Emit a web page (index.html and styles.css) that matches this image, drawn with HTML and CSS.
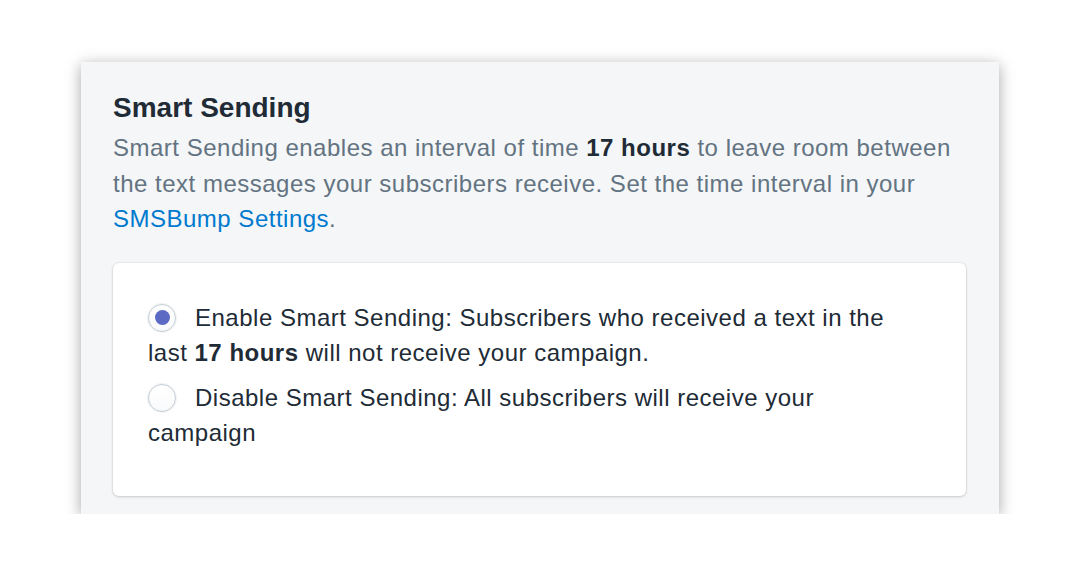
FILE: index.html
```html
<!DOCTYPE html>
<html>
<head>
<meta charset="utf-8">
<link rel="stylesheet" href="styles.css">
</head>
<body>
<div class="panel">
  <h2 class="title">Smart Sending</h2>
  <p class="desc">Smart Sending enables an interval of time <strong>17 hours</strong> to leave room between the text messages your subscribers receive. Set the time interval in your <a class="link" href="#">SMSBump Settings</a>.</p>
  <div class="card">
    <label class="option"><span class="radio"><span class="dot"></span></span>Enable Smart Sending: Subscribers who received a text in the last <strong>17 hours</strong> will not receive your campaign.</label>
    <label class="option"><span class="radio"></span>Disable Smart Sending: All subscribers will receive your campaign</label>
  </div>
</div>
</body>
</html>
```
FILE: styles.css
```css
html, body {
  margin: 0;
  padding: 0;
  background: #ffffff;
  font-family: "Liberation Sans", Arial, sans-serif;
}
.panel {
  margin: 62px 0 0 81px;
  width: 918px;
  box-sizing: border-box;
  background: #f4f6f8;
  padding: 28px 33px 18px 32px;
  box-shadow: 0 3px 14px rgba(0, 0, 0, 0.35);
}
.title {
  margin: 0;
  font-size: 28px;
  line-height: 36px;
  font-weight: 700;
  color: #212b36;
}
.desc {
  margin: 4px 0 0;
  font-size: 24px;
  line-height: 35.5px;
  letter-spacing: 0.5px;
  color: #637381;
}
.desc strong {
  color: #212b36;
  font-weight: 700;
}
.link {
  color: #007ace;
  text-decoration: none;
}
.card {
  margin-top: 26px;
  background: #ffffff;
  border-radius: 6px;
  box-shadow: 0 0 0 1px rgba(63, 63, 68, 0.05), 0 1px 3px rgba(63, 63, 68, 0.2);
  padding: 37px 66px 46px 35px;
  display: flex;
  flex-direction: column;
  gap: 10px;
}
.option {
  display: block;
  font-size: 24px;
  line-height: 35px;
  letter-spacing: 0.5px;
  color: #212b36;
}
.option strong {
  font-weight: 700;
}
.radio {
  display: inline-block;
  width: 28px;
  height: 28px;
  box-sizing: border-box;
  border-radius: 50%;
  border: 1.5px solid #c4cdd5;
  background: linear-gradient(#ffffff, #f9fafb);
  box-shadow: 0 0 0 1px rgba(196, 205, 213, 0.25);
  vertical-align: -6px;
  margin-right: 19px;
}
.dot {
  display: block;
  width: 15px;
  height: 15px;
  margin: 5px auto 0;
  border-radius: 50%;
  background: #5c6ac4;
}
```
